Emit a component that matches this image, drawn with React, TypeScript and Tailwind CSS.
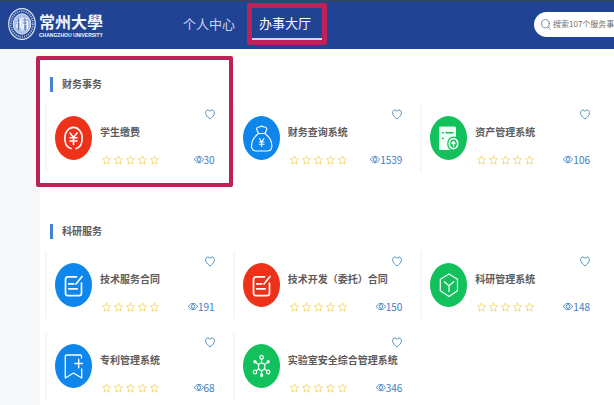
import type { ReactNode } from "react";

type Service = { title: string; views: number; color: string; icon: ReactNode };

const BLUE = "#0f86ec";
const RED = "#ee3219";
const GREEN = "#12c05c";

const yuan = (
  <g>
    <path d="M16 32.6C12 31.4 9.8 27 9.8 22c0-6 3.8-10.6 8.7-10.6S27.200 16 27.200 22c0 5-2.200 9.400-6.200 10.600" strokeWidth="1.6" />
    <path d="M15 17l3.500 4.500L22 17M18.500 21.500V28.500M15 21.800h7M15 25h7" strokeWidth="1.6" />
  </g>
);

const moneyBag = (
  <g strokeWidth="1.1">
    <path d="M15.500 17.500c-.5-2-2.500-3.500-1.800-5.300 1-2 2.800-.6 5-2.200 2.200 1.600 4 .2 5 2.200.7 1.800-1.300 3.300-1.800 5.300zM15.500 17.500c-4 3-7 8-7 12.500 0 3.500 2 5 5 5h10.400c3 0 5-1.500 5-5 0-4.500-3-9.500-7-12.500" />
    <path d="M16.500 22.500l2.200 3.500 2.200-3.500M18.700 26v4.500M16.300 26h4.800M16.300 28.200h4.800" />
  </g>
);

const assetDoc = (
  <g>
    <path d="M10.500 10.500h14q1.500 0 1.500 1.500v22H10.500Q9 34 9 32.500V12q0-1.500 1.500-1.500z" fill="#effff5" stroke="none" />
    <path d="M12.500 16.700h.7M16 16.700h7M12.500 22.500h.7" stroke={GREEN} strokeWidth="1.5" />
    <ellipse cx="23.500" cy="27.700" rx="6.300" ry="7.200" fill={GREEN} stroke="none" />
    <ellipse cx="23.500" cy="27.700" rx="4.200" ry="5" strokeWidth="1.700" />
    <path d="M23.500 30.200v-4M22 27.500l1.500-2 1.500 2" strokeWidth="1.400" />
  </g>
);

const contract = (
  <g strokeWidth="1.700">
    <path d="M21.500 13.800H13q-2.500 0-2.500 2.700V30q0 2.700 2.500 2.700h11q2.500 0 2.500-2.700V20" />
    <path d="M27 13.500l-6 7.500M13.700 20.800h5M13.700 25.800h8.500" />
  </g>
);

const cube = (
  <g strokeWidth="1.200">
    <path d="M19 11l8.500 5.200v11.600L19 33.500l-8.700-5.700V16.200z" />
    <path d="M14.300 18.700l4.700 4 4.700-4M19 22.700V28.500" />
  </g>
);

const bookmark = (
  <g strokeWidth="1.300">
    <path d="M26.500 14v-1.500q0-1.500-1.500-1.500H11.800q-1.500 0-1.500 1.500V34l8.200-5 8.200 5V25" />
    <path d="M19.800 19.500h7.700M23.700 15.200v8.600" />
  </g>
);

const molecule = (
  <g strokeWidth="1.200">
    <ellipse cx="18.600" cy="22.700" rx="3.200" ry="3.700" />
    <path d="M18.600 19v-4M15.800 20.800l-2.600-2.200M21.400 20.800l2.600-2.200M15.800 24.800l-2.500 2M21.400 24.800l2.500 2M18.600 26.500v3.300" />
    <ellipse cx="18.600" cy="13.300" rx="1.700" ry="1.900" />
    <ellipse cx="12" cy="28" rx="1.700" ry="1.900" />
    <ellipse cx="25.200" cy="28" rx="1.700" ry="1.900" />
    <g fill="#fff" stroke="none">
      <ellipse cx="12" cy="17.700" rx="1.600" ry="1.800" />
      <ellipse cx="25.200" cy="17.700" rx="1.600" ry="1.800" />
      <ellipse cx="18.600" cy="31.200" rx="1.600" ry="1.900" />
    </g>
  </g>
);

const finance: Service[] = [
  { title: "学生缴费", views: 30, color: RED, icon: yuan },
  { title: "财务查询系统", views: 1539, color: BLUE, icon: moneyBag },
  { title: "资产管理系统", views: 106, color: GREEN, icon: assetDoc },
];

const research: Service[] = [
  { title: "技术服务合同", views: 191, color: BLUE, icon: contract },
  { title: "技术开发（委托）合同", views: 150, color: RED, icon: contract },
  { title: "科研管理系统", views: 148, color: GREEN, icon: cube },
  { title: "专利管理系统", views: 68, color: BLUE, icon: bookmark },
  { title: "实验室安全综合管理系统", views: 346, color: GREEN, icon: molecule },
];

function Star() {
  return (
    <svg viewBox="0 0 10 11" className="h-[10px] w-[9px]" fill="none" stroke="#f0d45c" strokeWidth="0.9" strokeLinejoin="round">
      <path d="M5 .8l1.300 3.100 3.200.4-2.400 2.300.7 3.500L5 8.400l-2.800 1.700.7-3.500L.5 4.300l3.200-.4z" />
    </svg>
  );
}

function Card({ service }: { service: Service }) {
  return (
    <li className="flex h-17 items-center border-l-2 border-[#f5f8fb] pr-[18px] pl-2">
      <svg viewBox="0 0 37 44" className="h-[44px] w-[37px] shrink-0" fill="none" stroke="#fff" strokeLinecap="round" strokeLinejoin="round">
        <ellipse cx="18.500" cy="22" rx="18.500" ry="22" fill={service.color} stroke="none" />
        {service.icon}
      </svg>
      <div className="ml-2 flex min-w-0 flex-1 flex-col">
        <button type="button" aria-label={`收藏 ${service.title}`} className="self-end">
          <svg viewBox="0 0 10 11" className="block h-[11px] w-[10px]" fill="none" stroke="#5795bd" strokeWidth="1" strokeLinejoin="round">
            <path d="M5 10C2.500 8 .6 6.200.6 3.800.6 2.200 1.600 1 2.900 1 3.900 1 4.600 1.600 5 2.400 5.400 1.600 6.100 1 7.100 1c1.300 0 2.300 1.200 2.300 2.800C9.400 6.200 7.500 8 5 10z" />
          </svg>
        </button>
        <a href="#service" className="mt-1 text-[10px] leading-4 font-bold whitespace-nowrap text-[#5c5c5c]">{service.title}</a>
        <div className="mt-3 flex h-4 items-center justify-between">
          <span role="img" aria-label="五星评分" className="ml-[2px] flex gap-[3px]">
            <Star />
            <Star />
            <Star />
            <Star />
            <Star />
          </span>
          <span className="flex items-center text-[10px] leading-4 text-[#3d7dc4]">
            <svg viewBox="0 0 10 9" className="h-[9px] w-[10px]" fill="none" stroke="currentColor" strokeWidth="0.9">
              <path d="M.5 4.500C2.800.3 7.200.3 9.500 4.500 7.200 8.700 2.800 8.700.5 4.500z" />
              <ellipse cx="5" cy="4.500" rx="1.700" ry="1.900" />
            </svg>
            {service.views}
          </span>
        </div>
      </div>
    </li>
  );
}

function Section({ title, services, highlighted }: { title: string; services: Service[]; highlighted?: boolean }) {
  return (
    <section className="relative pt-[27px] pr-[6px] pb-3 pl-[5px]">
      <h2 className="ml-[5px] flex items-center text-[10px] leading-4 font-bold text-[#5c5c5c]">
        <span className="mr-[9px] h-[15px] w-[3px] bg-[#4484d4]" />
        {title}
      </h2>
      <ul className="mt-3 grid grid-cols-3 gap-y-[13px]">
        {services.map((s) => (
          <Card key={s.title} service={s} />
        ))}
      </ul>
      {highlighted && <div className="pointer-events-none absolute top-[7px] -left-1 h-[131px] w-[197px] rounded-xs border-4 border-[#be2157]" />}
    </section>
  );
}

function Seal() {
  return (
    <svg viewBox="0 0 28 32" className="h-[32px] w-[28px]" fill="none" stroke="#dfe8fb">
      <ellipse cx="14" cy="16" rx="13.300" ry="15.300" strokeWidth="1.200" />
      <ellipse cx="14" cy="16" rx="11" ry="12.800" strokeWidth="2" strokeDasharray="1.200 1" opacity=".7" />
      <ellipse cx="14" cy="16" rx="8.800" ry="10.200" strokeWidth="1" fill="#a9bfe8" />
      <path d="M9 11h3.500v9M9 14.500h3M9 20v-4M15 10.500h4.500M15 13.500h4.500v8M15.500 21.500v-5h3M14 9v14" stroke="#f4f8ff" strokeWidth="1.200" />
      <path d="M10.500 10v12M17 10v12" stroke="#2c4f9d" strokeWidth=".7" />
    </svg>
  );
}

export default function App() {
  return (
    <div className="min-h-screen overflow-hidden bg-[#f7f8fa] font-['Noto_Sans_CJK_SC',sans-serif]">
      <header className="flex h-[49px] items-center border-t-2 border-[#2d4668] bg-[#204493] pb-[3px]">
        <a href="#home" className="flex w-[171px] shrink-0 items-center pl-2 text-[#f1f5ff]">
          <Seal />
          <span className="ml-[3px] flex flex-col">
            <span className="text-[16px] leading-[22px] font-bold">常州大學</span>
            <span className="font-['Liberation_Sans',sans-serif] text-[5px] leading-[6px] font-bold whitespace-nowrap">CHANGZHOU UNIVERSITY</span>
          </span>
        </a>
        <nav className="flex h-[42px] shrink-0 items-center text-[13px]">
          <a href="#me" className="px-3 text-[#c6d5f5]">个人中心</a>
          <a href="#hall" className="flex h-[42px] w-20 items-center rounded-xs border-[5px] border-[#be2157] text-white">
            <span className="flex h-full w-full items-center border-b-2 border-[#cfd8ee] pl-[7px]">办事大厅</span>
          </a>
        </nav>
        <form className="ml-auto flex h-[25px] w-20 items-center overflow-hidden rounded-l-full bg-white pl-[7px]">
          <label htmlFor="search" aria-label="搜索" className="shrink-0">
            <svg viewBox="0 0 10 11" className="h-[11px] w-[10px]" fill="none" stroke="#6d7f98" strokeWidth="0.9" strokeLinecap="round">
              <ellipse cx="4.500" cy="4.700" rx="3.900" ry="4.200" />
              <path d="M7.200 8l2.200 2.300" />
            </svg>
          </label>
          <input id="search" type="search" placeholder="搜索107个服务事项" className="ml-[2px] w-24 shrink-0 bg-transparent text-[8px] leading-4 outline-none placeholder:text-[#6f6f6f]" />
        </form>
      </header>
      <main className="ml-10 min-h-[356px] bg-white">
        <div className="h-[147px]">
          <Section title="财务事务" services={finance} highlighted />
        </div>
        <Section title="科研服务" services={research} />
      </main>
    </div>
  );
}
